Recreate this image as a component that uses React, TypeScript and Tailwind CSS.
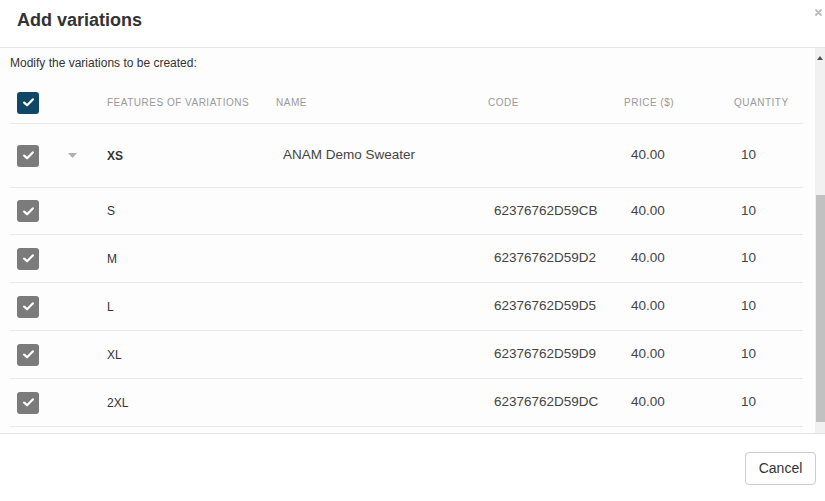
const rows = [
  { size: "S", code: "62376762D59CB", h: "h-[47px]" },
  { size: "M", code: "62376762D59D2", h: "h-[48px]" },
  { size: "L", code: "62376762D59D5", h: "h-[48px]" },
  { size: "XL", code: "62376762D59D9", h: "h-[48px]" },
  { size: "2XL", code: "62376762D59DC", h: "h-[48px]" },
];

const Check = ({ className }: { className: string }) => (
  <span className={`flex h-[22px] w-[22px] items-center justify-center rounded-[3px] ${className}`}>
    <svg width="11" height="9" viewBox="0 0 11 9">
      <path d="M1.2 4.6 L4.1 7.3 L9.8 1.4" fill="none" stroke="#fff" strokeWidth="2.2" strokeLinecap="round" strokeLinejoin="round" />
    </svg>
  </span>
);

const App = () => {
  return (
    <div className="flex h-[501px] w-[825px] flex-col bg-white font-['Liberation_Sans',Arial,sans-serif] text-[#444]">
      {/* header */}
      <div className="relative h-[48px] shrink-0 border-b border-[#e5e5e5] pl-[17px] pt-[9px]">
        <h1 className="text-[18px] font-bold leading-[22px] text-[#333]">Add variations</h1>
        <svg className="absolute right-[3px] top-[9px]" width="7" height="7" viewBox="0 0 7 7">
          <path d="M1 1 L6 6 M6 1 L1 6" stroke="#bdbdbd" strokeWidth="1.8" strokeLinecap="round" />
        </svg>
      </div>

      {/* body */}
      <div className="flex h-[385px] shrink-0 bg-[#fdfdfd]">
        <div className="flex-1 pl-[10px] pr-[12px] pt-[8px]">
          <p className="h-[26px] text-[12px] leading-[14px] text-[#333]">Modify the variations to be created:</p>

          <div className="flex h-[42px] items-center border-b border-[#e8e8e8] text-[10px] tracking-[0.5px] text-[#999]">
            <div className="w-[97px] pl-[7px]">
              <Check className="bg-[#0f4766]" />
            </div>
            <div className="w-[169px]">FEATURES OF VARIATIONS</div>
            <div className="w-[212px]">NAME</div>
            <div className="w-[136px]">CODE</div>
            <div className="w-[110px]">PRICE ($)</div>
            <div className="flex-1">QUANTITY</div>
          </div>

          <div className="flex h-[64px] items-center border-b border-[#e8e8e8] text-[13.5px]">
            <div className="flex w-[97px] items-center pl-[7px]">
              <Check className="bg-[#7b7b7b]" />
              <svg className="ml-[29px]" width="9" height="5" viewBox="0 0 9 5">
                <path d="M0 0 H9 L4.5 5 Z" fill="#b0b0b0" />
              </svg>
            </div>
            <div className="w-[176px] text-[12px] font-bold text-[#333]">XS</div>
            <div className="w-[212px]">ANAM Demo Sweater</div>
            <div className="w-[136px]"></div>
            <div className="w-[110px]">40.00</div>
            <div className="flex-1">10</div>
          </div>

          {rows.map((r) => (
            <div key={r.size} className={`flex ${r.h} items-center border-b border-[#e8e8e8] text-[13.5px]`}>
              <div className="w-[97px] pl-[7px]">
                <Check className="bg-[#7b7b7b]" />
              </div>
              <div className="w-[176px] text-[12px] text-[#333]">{r.size}</div>
              <div className="w-[211px]"></div>
              <div className="w-[137px]">{r.code}</div>
              <div className="w-[110px]">40.00</div>
              <div className="flex-1">10</div>
            </div>
          ))}
        </div>

        {/* scrollbar */}
        <div className="flex w-[10px] flex-col items-center bg-[#f1f1f1]">
          <svg className="mt-[8px]" width="6" height="4" viewBox="0 0 6 4">
            <path d="M0 4 L3 0 L6 4 Z" fill="#505050" />
          </svg>
          <div className="mt-[135px] h-[227px] w-[9px] bg-[#c1c1c1]" />
        </div>
      </div>

      {/* footer */}
      <div className="flex flex-1 justify-end border-t border-[#e5e5e5] pr-[9px] pt-[18px]">
        <button className="h-[33px] w-[71px] rounded-[4px] border border-[#ccc] bg-white text-[14px] text-[#333]">
          Cancel
        </button>
      </div>
    </div>
  );
};

export default App;
